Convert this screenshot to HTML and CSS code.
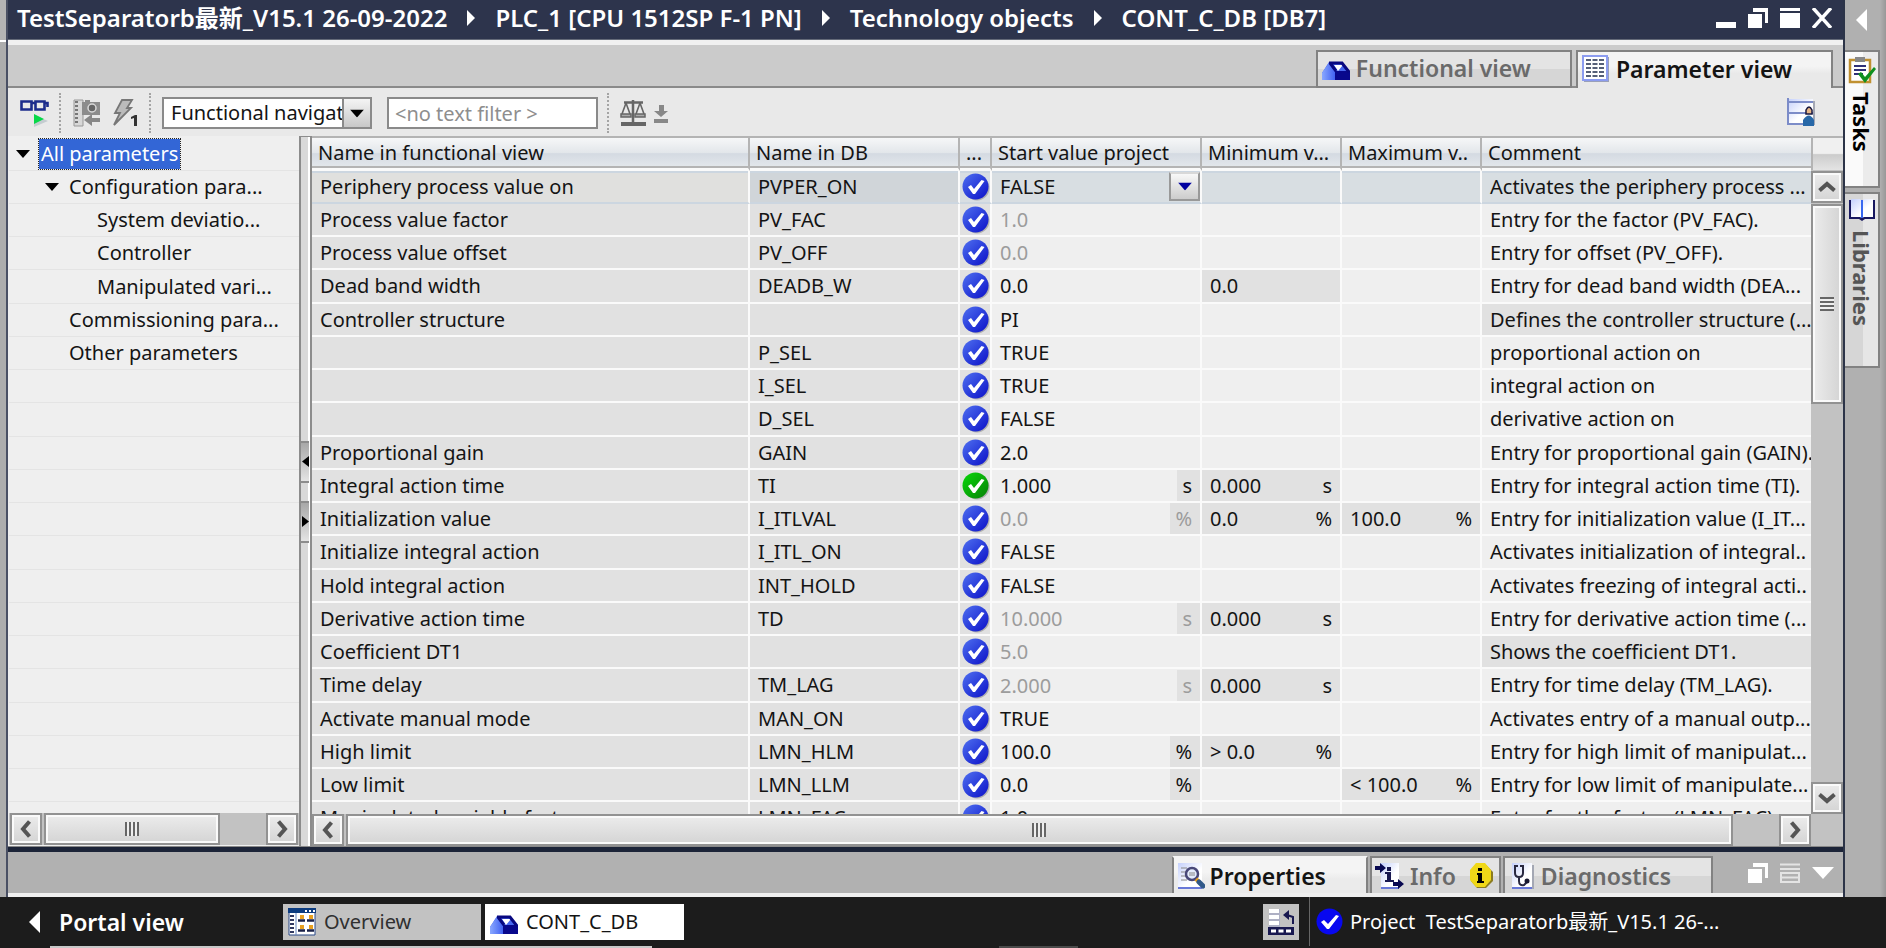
FILE: index.html
```
<!DOCTYPE html>
<html lang="en">
<head>
<meta charset="utf-8">
<title>CONT_C_DB [DB7]</title>
<link rel="stylesheet" href="styles.css">
</head>
<body>
<svg class="defs" aria-hidden="true">
  <defs>
    <linearGradient id="gBlue" x1="0" y1="0" x2="1" y2="1"><stop offset="0" stop-color="#5070f0"/><stop offset=".5" stop-color="#2c40dc"/><stop offset="1" stop-color="#0c10c8"/></linearGradient>
    <linearGradient id="gGreen" x1="0" y1="0" x2="1" y2="1"><stop offset="0" stop-color="#08d808"/><stop offset="1" stop-color="#088008"/></linearGradient>
    <linearGradient id="gPage" x1="0" y1="0" x2="1" y2="1"><stop offset="0" stop-color="#c4d0fc"/><stop offset=".6" stop-color="#fff"/></linearGradient>
    <linearGradient id="gBox" x1="0" y1="0" x2="1" y2="0"><stop offset="0" stop-color="#8aa8ff"/><stop offset="1" stop-color="#3c5cf0"/></linearGradient>
  </defs>
  <symbol id="ok" viewBox="0 0 28 28"><circle cx="15" cy="15" r="12.5" fill="#9a9a9a" opacity=".7"/><circle cx="13.5" cy="13.5" r="13" fill="url(#gBlue)"/><path d="M6 14l3-2 3 4 7.500-9 3 1-9.500 13h-2z" fill="#fff"/></symbol>
  <symbol id="okg" viewBox="0 0 28 28"><circle cx="15" cy="15" r="12.500" fill="#9a9a9a" opacity=".7"/><circle cx="13.500" cy="13.500" r="13" fill="url(#gGreen)"/><path d="M6 14l3-2 3 4 7.500-9 3 1-9.500 13h-2z" fill="#fff"/></symbol>
  <symbol id="toolbox" viewBox="0 -6 28 26"><path d="M0 19V12L7 1h13l8 10v8z" fill="#4868f0"/><path d="M0 19V12L7 2l7 9v8z" fill="url(#gBox)"/><path d="M13 10h15v9H13z" fill="#08088c"/><path d="M12 4h9l-5 6z" fill="#fff"/><path d="M7 2h13l7 9M8 2l6 8" fill="none" stroke="#080880" stroke-width="3"/></symbol>
  <symbol id="left" viewBox="0 0 12 20"><path d="M9.500 2.500L3 10l6.500 7.500" fill="none" stroke="#555" stroke-width="4"/></symbol>
  <symbol id="right" viewBox="0 0 12 20"><path d="M2.500 2.500L9 10l-6.500 7.500" fill="none" stroke="#555" stroke-width="4"/></symbol>
  <symbol id="up" viewBox="0 0 20 12"><path d="M2.500 9.500L10 3l7.500 6.500" fill="none" stroke="#555" stroke-width="4"/></symbol>
  <symbol id="down" viewBox="0 0 20 12"><path d="M2.500 2.500L10 9l7.500-6.500" fill="none" stroke="#555" stroke-width="4"/></symbol>
  <symbol id="tri" viewBox="0 0 16 9"><path d="M0 0h16L8 9z"/></symbol>
  <symbol id="triR" viewBox="0 0 8 16"><path d="M0 0l8 8-8 8z"/></symbol>
  <symbol id="triL" viewBox="0 0 8 16"><path d="M8 0L0 8l8 8z"/></symbol>
  <symbol id="restore" viewBox="0 0 20 20"><path d="M5 0h15v15h-3V4H5z" fill="#fff"/><path d="M0 6h14v14H0z" fill="#fff"/></symbol>
</svg>

<div class="workspace">
  <div class="gutter"></div>
  <main class="editor">
    <header class="titlebar">
      <nav class="crumbs">
        <span>TestSeparatorb最新_V15.1 26-09-2022</span>
        <svg class="sep"><use href="#triR"/></svg>
        <span>PLC_1 [CPU 1512SP F-1 PN]</span>
        <svg class="sep"><use href="#triR"/></svg>
        <span>Technology objects</span>
        <svg class="sep"><use href="#triR"/></svg>
        <span>CONT_C_DB [DB7]</span>
      </nav>
      <div class="winbtns">
        <button aria-label="Minimize"><svg viewBox="0 0 20 20"><path d="M0 14h20v6H0z" fill="#fff"/></svg></button>
        <button aria-label="Restore"><svg viewBox="0 0 20 20"><use href="#restore"/></svg></button>
        <button aria-label="Maximize"><svg viewBox="0 0 20 20"><path d="M0 0h20v3H0zM0 5h20v15H0z" fill="#fff"/></svg></button>
        <button aria-label="Close"><svg viewBox="0 0 20 20"><path d="M1 0l18 20M19 0L1 20" stroke="#fff" stroke-width="3.500"/></svg></button>
      </div>
    </header>

    <div class="tabs">
      <button class="tab"><svg width="28" height="26"><use href="#toolbox"/></svg>Functional view</button>
      <button class="tab active"><svg width="28" height="28" viewBox="0 0 28 28"><path d="M2 2h25v25H2z" fill="#9aa0b8"/><path d="M1 1h24v24H1z" fill="#fff" stroke="#8c9cf0" stroke-width="2"/><path d="M4 5h18M4 9h18M4 13h18M4 17h18M4 21h18" stroke="#555f78" stroke-width="1.800" stroke-dasharray="5 1.500"/></svg>Parameter view</button>
    </div>

    <div class="toolbar">
      <button aria-label="Monitor all"><svg width="30" height="30" viewBox="0 0 30 30"><path d="M1.500 3.500h10v8h-10zM15.500 3.500h9v8h-9zM11 5h5M25 5h2.500v4" fill="none" stroke="#1c2c8c" stroke-width="2.600"/><path d="M14 17l14 6-14 6z" fill="#c4ccd0"/><path d="M14 16l10 5-10 5z" fill="#08d848"/></svg></button>
      <i class="dots"></i>
      <button aria-label="Snapshot"><svg width="30" height="30" viewBox="0 0 30 30"><path d="M2 2h9v26H2z" fill="#d8d8d8" stroke="#999"/><path d="M3 4h3M3 8h3M3 12h3M3 16h3M3 20h3M3 24h3" stroke="#777" stroke-width="2"/><path d="M10 4h3V2h5v2h10v13H10z" fill="#8c8c8c"/><circle cx="20" cy="10" r="4" fill="#666" stroke="#d8d8d8" stroke-width="1.500"/><path d="M28 20h-8v-4l-8 6 8 6v-4h8z" fill="#888"/></svg></button>
      <button aria-label="Monitor once"><svg width="30" height="30" viewBox="0 0 30 30"><path d="M12 2h10l-5 8h4L4 27l6-12H5z" fill="#bbb" stroke="#777" stroke-width="1.800"/><path d="M21 19l4-2h2v11h-3v-8l-3 1z" fill="#333"/></svg></button>
      <i class="dots"></i>
      <span class="combo"><select aria-label="View"><option>Functional navigation</option></select><span class="combo-arrow"><svg width="14" height="9" viewBox="0 0 16 9"><use href="#tri"/></svg></span></span>
      <input class="filter" type="text" placeholder="&lt;no text filter &gt;" aria-label="Text filter">
      <i class="dots"></i>
      <button aria-label="Compare"><svg width="28" height="28" viewBox="0 0 28 28" fill="none" stroke="#666"><path d="M13 1v23M4 3.500h19" stroke-width="2.500"/><path d="M6 4L2 15M6 4l4 11M20 4l-4 11M20 4l4 11" stroke-width="1.600"/><path d="M1 15h10v3H1zM15 15h10v3H15z" fill="#aaa" stroke-width="1.500"/><path d="M1 25h25" stroke-width="4"/></svg></button>
      <button aria-label="Scroll target" class="small"><svg width="14" height="28" viewBox="0 0 14 28"><path d="M5 6h5v6h4l-7 6-7-6h5zM0 20h14v4H0z" fill="#888"/></svg></button>
      <button aria-label="User settings" class="end"><svg width="30" height="30" viewBox="0 0 30 30"><path d="M3 3h25v24H3z" fill="#a4a8b4"/><path d="M1 1h25v24H1z" fill="url(#gPage)"/><path d="M1 0v26h26M1 4h25M1 15h25" fill="none" stroke="#7c8cc8" stroke-width="2"/><path d="M19 16v-4q3-6 6 0v4z" fill="#e8b888" stroke="#181840" stroke-width="1.500"/><path d="M16 28v-6q6-9 11 0v6z" fill="#2868a8"/></svg></button>
    </div>

    <div class="panes">
      <aside class="tree">
        <ul>
          <li><svg class="caret"><use href="#tri"/></svg><span class="selected">All parameters</span></li>
          <li class="l2"><svg class="caret"><use href="#tri"/></svg><span>Configuration para...</span></li>
          <li class="l3"><span>System deviatio...</span></li>
          <li class="l3"><span>Controller</span></li>
          <li class="l3"><span>Manipulated vari...</span></li>
          <li class="l2n"><span>Commissioning para...</span></li>
          <li class="l2n"><span>Other parameters</span></li>
          <li></li><li></li><li></li><li></li><li></li><li></li><li></li><li></li><li></li><li></li><li></li><li></li><li></li><li></li>
        </ul>
        <div class="hscroll tree-scroll">
          <button aria-label="Scroll left"><svg width="12" height="20"><use href="#left"/></svg></button>
          <div class="thumb"><i class="grip"></i></div>
          <button class="end" aria-label="Scroll right"><svg width="12" height="20"><use href="#right"/></svg></button>
        </div>
      </aside>

      <div class="splitter">
        <button aria-label="Collapse left"><svg width="7" height="11" viewBox="0 0 8 16" preserveAspectRatio="none"><use href="#triL"/></svg></button>
        <button aria-label="Collapse right"><svg width="7" height="11" viewBox="0 0 8 16" preserveAspectRatio="none"><use href="#triR"/></svg></button>
      </div>

      <section class="grid">
        <div class="grid-body">
          <div class="table-clip">
          <table>
            <colgroup><col class="c-name"><col class="c-db"><col class="c-state"><col class="c-start"><col class="c-lim"><col class="c-lim"><col></colgroup>
            <thead><tr><th>Name in functional view</th><th>Name in DB</th><th>...</th><th>Start value project</th><th>Minimum v...</th><th>Maximum v..</th><th>Comment</th></tr></thead>
            <tbody>
              <tr class="current"><td>Periphery process value on</td><td>PVPER_ON</td><td><svg><use href="#ok"/></svg></td><td><div class="val">FALSE<button class="drop" aria-label="Choose value"><svg width="14" height="9" viewBox="0 0 16 9"><use href="#tri"/></svg></button></div></td><td></td><td></td><td>Activates the periphery process ...</td></tr>
              <tr><td>Process value factor</td><td>PV_FAC</td><td><svg><use href="#ok"/></svg></td><td class="dim">1.0</td><td></td><td></td><td>Entry for the factor (PV_FAC).</td></tr>
              <tr><td>Process value offset</td><td>PV_OFF</td><td><svg><use href="#ok"/></svg></td><td class="dim">0.0</td><td></td><td></td><td>Entry for offset (PV_OFF).</td></tr>
              <tr><td>Dead band width</td><td>DEADB_W</td><td><svg><use href="#ok"/></svg></td><td>0.0</td><td class="ro">0.0</td><td></td><td>Entry for dead band width (DEA...</td></tr>
              <tr><td>Controller structure</td><td></td><td><svg><use href="#ok"/></svg></td><td>PI</td><td></td><td></td><td class="ro">Defines the controller structure (...</td></tr>
              <tr><td></td><td>P_SEL</td><td><svg><use href="#ok"/></svg></td><td>TRUE</td><td></td><td></td><td>proportional action on</td></tr>
              <tr><td></td><td>I_SEL</td><td><svg><use href="#ok"/></svg></td><td>TRUE</td><td></td><td></td><td>integral action on</td></tr>
              <tr><td></td><td>D_SEL</td><td><svg><use href="#ok"/></svg></td><td>FALSE</td><td></td><td></td><td>derivative action on</td></tr>
              <tr><td>Proportional gain</td><td>GAIN</td><td><svg><use href="#ok"/></svg></td><td>2.0</td><td></td><td></td><td>Entry for proportional gain (GAIN).</td></tr>
              <tr><td>Integral action time</td><td>TI</td><td><svg><use href="#okg"/></svg></td><td><div class="val">1.000<span class="unit">s</span></div></td><td class="ro"><div class="val">0.000<span class="unit">s</span></div></td><td></td><td>Entry for integral action time (TI).</td></tr>
              <tr><td>Initialization value</td><td>I_ITLVAL</td><td><svg><use href="#ok"/></svg></td><td class="dim"><div class="val">0.0<span class="unit">%</span></div></td><td class="ro"><div class="val">0.0<span class="unit">%</span></div></td><td class="ro"><div class="val">100.0<span class="unit">%</span></div></td><td>Entry for initialization value (I_IT...</td></tr>
              <tr><td>Initialize integral action</td><td>I_ITL_ON</td><td><svg><use href="#ok"/></svg></td><td>FALSE</td><td></td><td></td><td>Activates initialization of integral..</td></tr>
              <tr><td>Hold integral action</td><td>INT_HOLD</td><td><svg><use href="#ok"/></svg></td><td>FALSE</td><td></td><td></td><td>Activates freezing of integral acti..</td></tr>
              <tr><td>Derivative action time</td><td>TD</td><td><svg><use href="#ok"/></svg></td><td class="dim"><div class="val">10.000<span class="unit">s</span></div></td><td class="ro"><div class="val">0.000<span class="unit">s</span></div></td><td></td><td>Entry for derivative action time (...</td></tr>
              <tr><td>Coefficient DT1</td><td></td><td><svg><use href="#ok"/></svg></td><td class="dim">5.0</td><td></td><td></td><td class="ro">Shows the coefficient DT1.</td></tr>
              <tr><td>Time delay</td><td>TM_LAG</td><td><svg><use href="#ok"/></svg></td><td class="dim"><div class="val">2.000<span class="unit">s</span></div></td><td class="ro"><div class="val">0.000<span class="unit">s</span></div></td><td></td><td>Entry for time delay (TM_LAG).</td></tr>
              <tr><td>Activate manual mode</td><td>MAN_ON</td><td><svg><use href="#ok"/></svg></td><td>TRUE</td><td></td><td></td><td>Activates entry of a manual outp...</td></tr>
              <tr><td>High limit</td><td>LMN_HLM</td><td><svg><use href="#ok"/></svg></td><td><div class="val">100.0<span class="unit">%</span></div></td><td class="ro"><div class="val">&gt; 0.0<span class="unit">%</span></div></td><td></td><td>Entry for high limit of manipulat...</td></tr>
              <tr><td>Low limit</td><td>LMN_LLM</td><td><svg><use href="#ok"/></svg></td><td><div class="val">0.0<span class="unit">%</span></div></td><td></td><td class="ro"><div class="val">&lt; 100.0<span class="unit">%</span></div></td><td>Entry for low limit of manipulate...</td></tr>
              <tr><td>Manipulated variable factor</td><td>LMN_FAC</td><td><svg><use href="#ok"/></svg></td><td>1.0</td><td></td><td></td><td>Entry for the factor (LMN_FAC).</td></tr>
            </tbody>
          </table>
          </div>
          <div class="vscroll">
            <div class="corner"></div>
            <button aria-label="Scroll up"><svg width="20" height="12"><use href="#up"/></svg></button>
            <div class="thumb"><i class="grip"></i></div>
            <button class="end" aria-label="Scroll down"><svg width="20" height="12"><use href="#down"/></svg></button>
          </div>
        </div>
        <div class="hscroll grid-scroll">
          <button aria-label="Scroll left"><svg width="12" height="20"><use href="#left"/></svg></button>
          <div class="thumb"><i class="grip"></i></div>
          <button class="end" aria-label="Scroll right"><svg width="12" height="20"><use href="#right"/></svg></button>
        </div>
      </section>
    </div>

    <footer class="inspector">
      <button class="itab active"><svg width="28" height="28" viewBox="0 0 28 28"><path d="M1 1h24v25H1z" fill="url(#gPage)"/><path d="M1 26h24" stroke="#6878d8" stroke-width="2"/><path d="M4 6h6M4 10h5M4 14h5M4 18h6" stroke="#888"/><circle cx="15" cy="12" r="6" fill="#e4ecfc" stroke="#484878" stroke-width="2.500"/><path d="M12 11h6M12 13h6" stroke="#888"/><path d="M19 17l3 3" stroke="#e8a020" stroke-width="4"/><path d="M22 20l4 4" stroke="#305888" stroke-width="5" stroke-linecap="round"/></svg>Properties</button>
      <button class="itab info"><svg width="30" height="28" viewBox="0 0 30 28"><path d="M6 1h18v25H6z" fill="url(#gPage)"/><path d="M6 26h18" stroke="#6878d8" stroke-width="2"/><path d="M0 4h5V1l6 5-6 5V8H0zM18 20h5v-3l6 5-6 5v-3h-5z" fill="#080850"/><path d="M12 5h4v4h-4zM10 10h6v8h3v2h-9v-2h2v-6h-2z" fill="#181850"/></svg>Info<svg class="alert" width="24" height="26" viewBox="0 0 24 26"><path d="M8 2h9l7 7v9l-7 7H8l-6-7V9z" fill="#8c7c20"/><path d="M7 0h9l6 7v10l-6 7H7l-6-7V7z" fill="#f0d818"/><path d="M9 5h4v3H9zM8 10h5v8h2v2H8v-2h1v-6H8z" fill="#000"/></svg></button>
      <button class="itab"><svg width="24" height="28" viewBox="0 0 24 28"><path d="M3 3h20v24H3z" fill="#a4a8b4"/><path d="M1 1h20v25H1z" fill="url(#gPage)"/><path d="M1 26h20" stroke="#6878d8" stroke-width="2"/><path d="M7 4H4v7q0 4 4 4t4-4V4H9M8 15v4q0 5 5 4l3-3" fill="none" stroke="#282840" stroke-width="2"/><circle cx="16" cy="19" r="2.500" fill="#181830"/></svg>Diagnostics</button>
      <div class="ictl">
        <button aria-label="Restore"><svg width="20" height="20"><use href="#restore"/></svg></button>
        <button aria-label="List"><svg width="20" height="20" viewBox="0 0 20 20"><path d="M0 1.500h20M0 6h20M1 10h18v9H1zM1 14.500h18" fill="none" stroke="#e4e4e4" stroke-width="2"/></svg></button>
        <button aria-label="Collapse"><svg width="22" height="12" viewBox="0 0 22 12"><path d="M0 0h22L11 12z" fill="#fff"/></svg></button>
      </div>
    </footer>
  </main>

  <aside class="cards">
    <button class="expand" aria-label="Expand"><svg width="11" height="22" viewBox="0 0 8 16"><use href="#triL" fill="#fff"/></svg></button>
    <button class="card active"><svg width="28" height="28" viewBox="0 0 28 28"><path d="M2 4h20v22H2z" fill="#fff" stroke="#c09030" stroke-width="2.500"/><path d="M7 1h10v5H7z" fill="#888"/><path d="M6 10h12M6 14h12M6 18h9" stroke="#303078" stroke-width="2"/><path d="M10 18l3-2 4 5 9-10 2 2-11 14z" fill="#109020"/></svg><span>Tasks</span></button>
    <button class="card"><svg width="28" height="24" viewBox="0 0 28 24"><path d="M1 2v19h10l3 2 3-2h10V2" fill="#181860"/><path d="M3 1h9l2 2v17l-2-1H3zM25 1h-9l-2 2v17l2-1h9z" fill="url(#gPage)"/><path d="M14 2v18" stroke="#3868f0" stroke-width="2"/></svg><span>Libraries</span></button>
  </aside>
</div>

<div class="taskbar">
  <button class="portal"><svg width="11" height="22" viewBox="0 0 8 16"><use href="#triL" fill="#fff"/></svg>Portal view</button>
  <button class="task"><svg width="28" height="28" viewBox="0 0 28 28"><path d="M1 1h26v26H1z" fill="#fff" stroke="#284888"/><path d="M0 0h28v5H0z" fill="#0c3c80"/><path d="M17 2h2v2h-2zM21 2h2v2h-2zM25 2h2v2h-2z" fill="#fff"/><path d="M2 8h4M2 12h4M2 16h4M2 20h4M2 24h4" stroke="#303860" stroke-width="2"/><path d="M8 5v22" stroke="#6888c0"/><path d="M12 7h4v4h-4zM21 7h4v4h-4zM12 17h4v4h-4zM21 17h4v4h-4z" fill="#e8a020"/><path d="M10 12.500h7M19 12.500h7M10 22.500h7M19 22.500h7" stroke="#182048" stroke-width="2.500"/></svg>Overview</button>
  <button class="task active"><svg width="28" height="26"><use href="#toolbox"/></svg>CONT_C_DB</button>
  <div class="status">
    <button class="layout" aria-label="Layout"><svg width="28" height="28" viewBox="0 0 28 28"><path d="M2 1h11v18H2z" fill="#aeb0c4"/><path d="M2 3h10M2 9h10M2 15h10" stroke="#fff" stroke-width="4"/><path d="M26 16V9l-6-2" fill="none" stroke="#181850" stroke-width="2"/><path d="M16 7l6-5v10z" fill="#181850"/><path d="M1 19h26v8H1z" fill="#181850"/><path d="M4 23h5M11.500 23h5M19 23h5" stroke="#fff" stroke-width="3"/></svg></button>
    <div class="message"><svg width="27" height="27" viewBox="0 0 27 27"><circle cx="13.500" cy="13.500" r="13" fill="#0808f0"/><path d="M5 14l3-2 4 4 8-9 3 1-10 13h-2z" fill="#fff"/></svg><span>Project&nbsp; TestSeparatorb最新_V15.1 26-...</span></div>
  </div>
</div>
<div class="edge"><i></i><i></i></div>
</body>
</html>
```
FILE: styles.css
```
* { box-sizing: border-box; }
body {
  margin: 0; height: 100vh; display: flex; flex-direction: column; overflow: hidden;
  font: 20px/28px "Noto Sans", "Noto Sans CJK SC", sans-serif; color: #141414; background: #1c1c1c;
}
button { font: inherit; color: inherit; margin: 0; padding: 0; border: 0; background: none; display: flex; align-items: center; justify-content: center; }
svg { flex: none; display: block; }
.defs { position: absolute; width: 0; height: 0; }

.workspace { flex: 1; min-height: 0; display: flex; }
.gutter { width: 8px; background: linear-gradient(#b4b4b4 40px, #fff 40px, #fff 42px, #adadad 42px); border-right: 2px solid #4a5064; }
.editor { flex: 1; min-width: 0; display: flex; flex-direction: column; }

.titlebar { height: 40px; background: #2d344c; border-bottom: 1px solid #646a78; display: flex; justify-content: space-between; align-items: center; padding: 0 11px 3px 9px; color: #fff; }
.crumbs { display: flex; align-items: center; font-size: 24px; font-weight: 600; white-space: nowrap; gap: 20px; }
.sep { width: 8px; height: 16px; fill: #fff; }
.winbtns { display: flex; gap: 12px; }
.winbtns svg { width: 20px; height: 20px; }

.tabs { height: 48px; border-top: 5px solid #f0f0f0; background: #cbcbcb; display: flex; justify-content: flex-end; align-items: flex-end; gap: 4px; padding-right: 10px; box-shadow: inset 0 -2px #8a8a8a; }
.tab { height: 38px; border: 2px solid #828282; font-size: 23px; font-weight: 600; color: #6a6a6a; justify-content: flex-start; gap: 6px; padding: 0 39px 2px 4px; background: linear-gradient(#e4e4e4 50%, #d6d6d6 50%); }
.tab.active { color: #141414; border-bottom: 0; background: linear-gradient(#f4f4f4 40%, #e9e9e9 60%); }

.toolbar { height: 48px; background: #e9e9e9; display: flex; align-items: center; padding: 2px 26px 0 12px; gap: 8px; }
.toolbar .small { margin-left: -2px; }
.end { margin-left: auto; }
.dots { height: 40px; border-left: 2px dotted #a4a4a4; }
.toolbar .dots + button { margin-left: 3px; }
.toolbar button + .dots { margin-left: 1px; }
.combo { display: flex; width: 210px; height: 32px; border: 2px solid #8a8a8a; background: #fff; margin: 0 7px 0 3px; }
.combo select { appearance: none; border: 0; border-radius: 0; background: none; font: inherit; color: inherit; flex: 1; min-width: 0; padding: 0 0 0 7px; text-overflow: clip; }
.combo-arrow { width: 28px; display: flex; align-items: center; justify-content: center; border-left: 2px solid #8a8a8a; background: linear-gradient(#f4f4f4, #c8c8c8); pointer-events: none; }
.filter { width: 211px; height: 32px; border: 2px solid #8a8a8a; background: #fff; font: inherit; padding: 0 6px; margin-right: 1px; }
.filter::placeholder { color: #8e8e8e; opacity: 1; }

.panes { flex: 1; min-height: 0; display: flex; border-bottom: 1px solid #888; }

.tree { width: 291px; display: flex; flex-direction: column; background: #efefef; padding-left: 1px; }
.tree ul { list-style: none; margin: 0; padding: 1px 0 0; flex: 1; min-height: 0; overflow: hidden; }
.tree li { height: 33px; border-bottom: 1px solid #e4e4e4; display: flex; align-items: center; white-space: nowrap; padding-left: 7px; gap: 9px; }
.tree li:nth-child(4n+1) { height: 34px; }
.tree li.l2 { padding-left: 36px; gap: 10px; }
.tree li.l2n { padding-left: 60px; }
.tree li.l3 { padding-left: 88px; }
.caret { width: 14px; height: 8px; }
.selected { background: #3366d6; color: #fff; outline: 1px dotted #222; padding: 1px 2px; }

.splitter { width: 13px; background: #d9d9d9; border-left: 2px solid #8c8c8c; border-right: 2px solid #8c8c8c; border-top: 1px solid #8c8c8c; box-shadow: inset -2px 0 #fff; display: flex; flex-direction: column; justify-content: center; gap: 18px; }
.splitter button { height: 42px; margin-right: 1px; border: solid #8c8c8c; border-width: 2px 0; background: linear-gradient(#a8a8a8, #e4e4e4); }

.grid { flex: 1; min-width: 0; display: flex; flex-direction: column; background: #c2c2c2; }
.grid-body { flex: 1; min-height: 0; display: flex; }
.table-clip { flex: 1; min-width: 0; overflow: hidden; background: #efefef; }
table { width: 100%; table-layout: fixed; border-collapse: separate; border-spacing: 0; }
.c-name { width: 438px; } .c-db { width: 210px; } .c-state { width: 32px; } .c-start { width: 210px; } .c-lim { width: 140px; }
th, td { padding: 0 0 0 8px; text-align: left; font-weight: 400; white-space: nowrap; overflow: hidden; line-height: 28px; }
th { height: 35px; border-top: 2px solid #b4b4b4; border-right: 2px solid #b4b4b4; border-bottom: 3px solid #fafafa; padding-left: 6px; background: linear-gradient(#f6f7f8, #e2e6ea 50%, #d4dae2 52%, #e4e8ec); box-shadow: inset 0 -2px #b4b4b4; }
th:last-child { border-right: 0; }
td { height: 33px; border-right: 2px solid #fafafa; border-bottom: 2px solid #fafafa; background: #efefef; }
tr:nth-child(4n) td { height: 34px; }
td:nth-child(-n+3), td.ro { background: #e1e1e1; }
td:last-child { border-right: 0; }
td:nth-child(3) { padding: 0 0 0 2px; }
td svg { width: 28px; height: 28px; }
td.dim { color: #9c9c9c; }
.current td { background: #d8dee2; border-bottom-color: #ccd6e0; box-shadow: inset 0 2px #ccd6e0; }
.current td:nth-child(1) { background: #e0e0de; }
.current td:nth-child(2) { background: #d0d5d9; }
.val { display: flex; justify-content: space-between; line-height: 31px; }
.unit { background: #e1e1e1; padding: 0 8px 0 5px; }
.drop { width: 31px; height: 29px; margin: 1px 0; border: 2px solid #999; border-top-color: #d8d8d8; background: linear-gradient(#f8f8f8, #ccc); fill: #0000a0; }
.drop svg { width: 14px; height: 9px; }

.hscroll, .vscroll { display: flex; background: #c2c2c2; }
.hscroll button, .vscroll button, .thumb { flex: none; border: 2px solid #929292; box-shadow: inset 0 0 0 2px #fafafa; background: linear-gradient(#ececec, #d4d4d4); display: flex; align-items: center; justify-content: center; }
.hscroll button { width: 32px; }
.hscroll { height: 32px; gap: 2px; }
.tree-scroll { padding: 0 1px; margin-bottom: 1px; }
.tree-scroll .thumb { width: 61%; }
.grid-scroll .thumb { width: 92.5%; }
.grid-scroll { padding-right: 32px; }
.vscroll { width: 32px; flex-direction: column; gap: 1px; }
.vscroll button { height: 32px; }
.vscroll .thumb { height: 200px; background: linear-gradient(90deg, #ececec, #d4d4d4); }
.vscroll .end { margin: auto 0 0; }
.corner { height: 34px; border-top: 2px solid #b4b4b4; border-left: 2px solid #b4b4b4; background: linear-gradient(#f0f0f0 48%, #ccc 52%, #e4e4e4); }
.hscroll .grip { width: 14px; height: 14px; background: repeating-linear-gradient(90deg, #666 0 2px, #eee 2px 4px); }
.vscroll .grip { width: 14px; height: 14px; background: repeating-linear-gradient(#666 0 2px, #eee 2px 4px); }

.inspector { height: 50px; border-top: 5px solid #1c2438; border-bottom: 4px solid #efefef; background: #b1b1b1; display: flex; justify-content: flex-end; align-items: flex-end; gap: 2px; }
.itab { height: 37px; font-size: 23px; font-weight: 600; color: #6a6a6a; border: 2px solid #828282; border-bottom: 0; background: linear-gradient(#e4e4e4 50%, #d6d6d6 50%); gap: 6px; padding: 0 40px 0 6px; }
.itab.active { color: #141414; background: linear-gradient(#f4f4f4 40%, #ebebeb 60%); border-top-color: #f4f4f4; padding-left: 3px; gap: 5px; }
.itab.info { padding: 0 6px 0 3px; gap: 5px; }
.alert { margin-left: 8px; }
.ictl { display: flex; align-self: center; align-items: center; gap: 12px; margin-left: 33px; padding: 0 9px 0 0; }

.cards { width: 43px; border-left: 2px solid #2c3448; background: linear-gradient(90deg, #b0b0b0 35px, #989898 41px); display: flex; flex-direction: column; align-items: flex-start; }
.expand { height: 40px; margin: 0 0 10px 11px; }
.card { width: 35px; border: 2px solid #828282; border-left: 0; background: linear-gradient(90deg, #d6d6d6 55%, #e6e6e6 55%); color: #555; flex-direction: column; justify-content: flex-start; gap: 8px; padding-top: 4px; height: 176px; font-size: 22px; font-weight: 700; }
.card.active { color: #000; height: 138px; margin-bottom: 4px; background: linear-gradient(90deg, #fafafa 55%, #ebebeb 55%); }
.card span { writing-mode: vertical-rl; line-height: 28px; }

.taskbar { height: 49px; display: flex; align-items: center; padding: 0 29px; color: #fff; }
.portal { font-size: 23px; font-weight: 600; gap: 19px; width: 254px; justify-content: flex-start; }
.task { width: 198px; height: 36px; background: #c2c2c2; color: #303030; justify-content: flex-start; gap: 8px; padding-left: 5px; margin-right: 4px; }
.task.active { background: #fff; color: #141414; width: 199px; }
.status { margin-left: auto; width: 594px; display: flex; align-items: center; }
.layout { width: 36px; height: 36px; background: #c2c2c2; margin-right: 10px; }
.message { height: 49px; border-left: 1px solid #666; display: flex; align-items: center; gap: 7px; padding-left: 6px; white-space: nowrap; }
.edge { height: 2px; display: flex; padding-left: 50px; }
.edge i { width: 602px; background: #c8c8c8; }
.edge i + i { width: 79px; margin-left: 347px; background: #4a4a4a; }
```
